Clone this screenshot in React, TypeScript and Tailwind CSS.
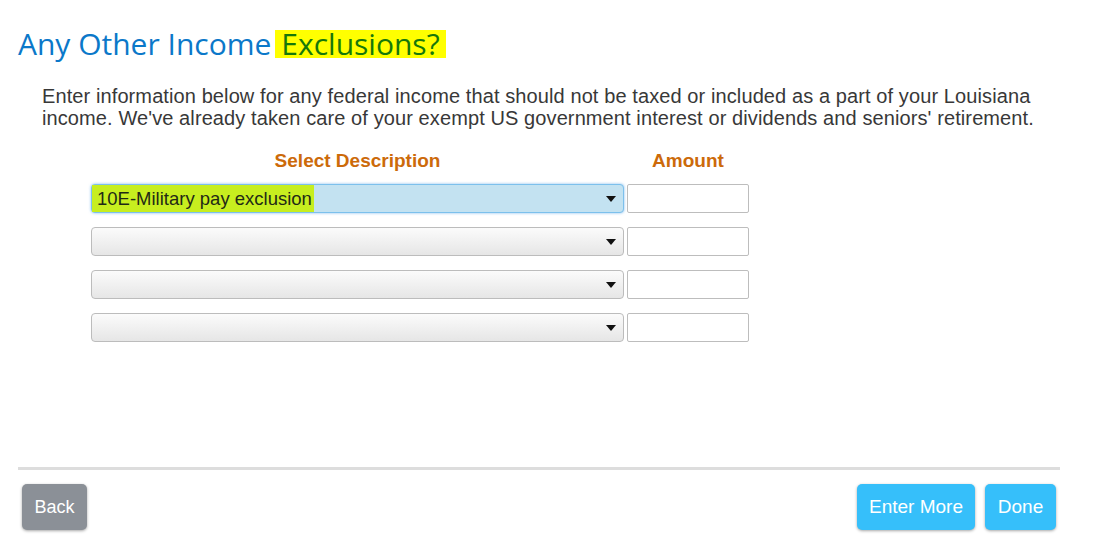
import { useState } from "react";

const rows = ["10E-Military pay exclusion", "", "", ""];

function Arrow() {
  return (
    <svg width="10" height="6" viewBox="0 0 10 6" className="shrink-0">
      <path d="M0 0h10L5 6z" fill="#111" />
    </svg>
  );
}

function DescSelect({ value, active }: { value: string; active: boolean }) {
  return (
    <div
      className={`flex h-[29px] w-[533px] items-center justify-between rounded-[4px] border pr-[7px] ${
        active
          ? "border-[#7cc0ec] bg-[#c3e2f1] shadow-[0_0_3px_rgba(80,160,230,0.7)]"
          : "border-[#bcbcbc] bg-gradient-to-b from-[#fbfbfb] to-[#e6e6e6]"
      }`}
    >
      {value ? (
        <span className="flex h-full items-center bg-[#c7ee1f] pl-[5px] pr-[2px] text-[18.5px] text-[#1f2a16]">
          {value}
        </span>
      ) : (
        <span />
      )}
      <Arrow />
    </div>
  );
}

export default function App() {
  const [amounts, setAmounts] = useState<string[]>(["", "", "", ""]);

  return (
    <div className="w-[1113px] h-[557px] bg-white pl-[18px] pt-[25px] font-['Liberation_Sans',Arial,sans-serif]">
      <h1 className="flex items-center text-[30px] leading-[38px] font-['Open_Sans',sans-serif] text-[#0b78c9]">
        <span>Any Other Income</span>
        <span className="ml-[4px] flex h-[28px] items-center bg-[#ffff00] pl-[6px] pr-[6px] text-[#16780a]">
          Exclusions?
        </span>
      </h1>

      <p className="mt-[22px] ml-[24px] w-[1040px] text-[20px] tracking-[0.1px] leading-[22px] text-[#383838]">
        Enter information below for any federal income that should not be taxed or included as a part of your Louisiana
        <br />
        income. We've already taken care of your exempt US government interest or dividends and seniors' retirement.
      </p>

      <div className="mt-[21px] ml-[73px] flex flex-col">
        <div className="flex text-[19px] font-bold leading-[22px] text-[#cc6a0a]">
          <div className="w-[533px] text-center">Select Description</div>
          <div className="ml-[3px] w-[122px] text-center">Amount</div>
        </div>
        <div className="mt-[12px] flex flex-col gap-[14px]">
          {rows.map((r, i) => (
            <div key={i} className="flex gap-[3px]">
              <DescSelect value={r} active={i === 0} />
              <input
                value={amounts[i]}
                onChange={(e) => {
                  const next = [...amounts];
                  next[i] = e.target.value;
                  setAmounts(next);
                }}
                className="h-[29px] w-[122px] rounded-[2px] border border-[#bdbdbd] bg-white px-1 text-[16px] outline-none"
              />
            </div>
          ))}
        </div>
      </div>

      <div className="mt-[125px] h-[3px] w-[1042px] bg-[#dddddd]" />

      <div className="mt-[14px] flex w-[1038px] items-start justify-between pl-[4px]">
        <button className="h-[46px] w-[65px] rounded-[5px] bg-[#8b9097] text-[18px] text-white shadow-[0_1px_3px_rgba(0,0,0,0.35)]">
          Back
        </button>
        <div className="flex gap-[10px]">
          <button className="h-[46px] w-[118px] rounded-[5px] bg-[#36bffa] text-[19px] text-white shadow-[0_1px_3px_rgba(0,0,0,0.35)]">
            Enter More
          </button>
          <button className="h-[46px] w-[71px] rounded-[5px] bg-[#36bffa] text-[19px] text-white shadow-[0_1px_3px_rgba(0,0,0,0.35)]">
            Done
          </button>
        </div>
      </div>
    </div>
  );
}
